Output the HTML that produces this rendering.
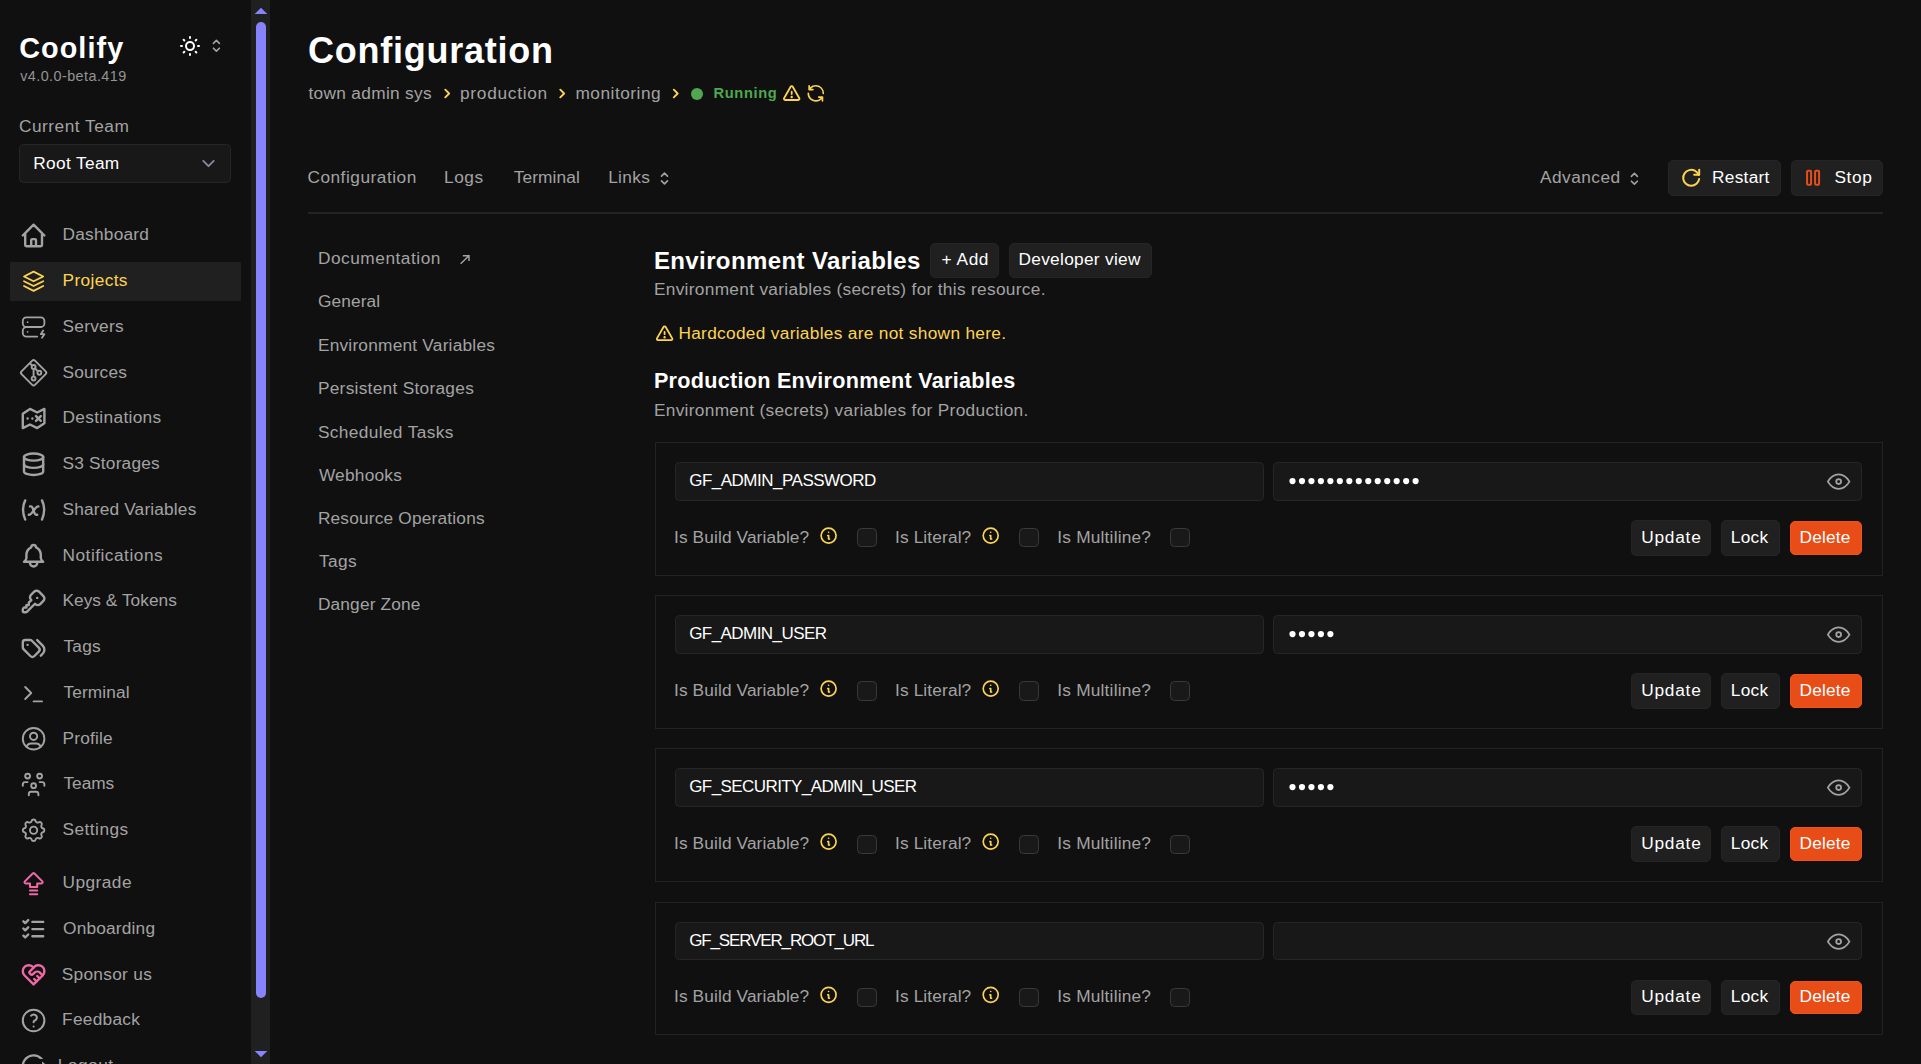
<!DOCTYPE html>
<html lang="en"><head><meta charset="utf-8">
<title>Configuration | Coolify</title>
<style>
html,body{margin:0;padding:0;background:#101010;}
body{width:1921px;height:1064px;overflow:hidden;position:relative;font-family:"Liberation Sans",sans-serif;}
.t{position:absolute;white-space:pre;line-height:1;}
.a{position:absolute;box-sizing:border-box;}
svg{position:absolute;overflow:visible;}
.ic{fill:none;stroke:currentColor;stroke-linecap:round;stroke-linejoin:round;}

.btn{position:absolute;box-sizing:border-box;background:#202020;border:1px solid #252525;border-radius:5px;}
.inp{position:absolute;box-sizing:border-box;background:#181818;border:1px solid #262626;border-radius:4.5px;}
.cb{position:absolute;box-sizing:border-box;background:#191919;border:1px solid #393939;border-radius:4.5px;width:20px;height:19.5px;}
.card{position:absolute;box-sizing:border-box;border:1px solid #222;}

</style></head><body>
<div class="a" style="left:251px;top:0;width:19px;height:1064px;background:#202020"></div>
<div class="a" style="left:256px;top:22px;width:10px;height:976px;background:#8783fd;border-radius:5px"></div>
<svg width="20" height="10" style="left:251px;top:5px"><path d="M3.7 9.1L10 2.8L16.3 9.1z" fill="#8783fd"/></svg>
<svg width="20" height="10" style="left:251px;top:1049px"><path d="M3.7 1.9L10 8.2L16.3 1.9z" fill="#8783fd"/></svg>
<svg class="ic" viewBox="0 0 24 24" width="24" height="24" style="left:178px;top:34px;color:#ffffff;stroke-width:2;"><g transform="translate(0.000 0.100)"><path d="M12 3v1m0 16v1m9-9h-1M4 12H3m15.364 6.364l-.707-.707M6.343 6.343l-.707-.707m12.728 0l-.707.707M6.343 17.657l-.707.707M16 12a4 4 0 11-8 0 4 4 0 018 0z"/></g></svg>
<svg class="ic" viewBox="0 0 24 24" width="19.2" height="19.2" style="left:206px;top:36px;color:#a3a3a3;stroke-width:2;"><g transform="translate(1.000 0.250)"><path d="M8.25 15L12 18.75 15.75 15m-7.500-6L12 5.250 15.750 9"/></g></svg>
<div class="inp" style="left:19.4px;top:144.2px;width:211.7px;height:38.4px;"></div>
<svg class="ic" viewBox="0 0 20 20" width="26" height="26" style="left:195px;top:150px;color:#8189a0;stroke-width:1.5;"><g transform="translate(0.385 0.385)"><path d="M6 8l4 4 4-4"/></g></svg>
<div class="a" style="left:9.6px;top:262.4px;width:231.6px;height:38.4px;background:#202020;border-radius:1px"></div>
<svg class="ic" viewBox="0 0 24 24" width="28.8" height="28.8" style="left:19px;top:221px;color:#a3a3a3;stroke-width:2;"><g transform="translate(0.167 0.083)"><path d="M3 12l2-2m0 0l7-7 7 7M5 10v10a1 1 0 001 1h3m10-11l2 2m-2-2v10a1 1 0 01-1 1h-3m-6 0a1 1 0 001-1v-4a1 1 0 011-1h2a1 1 0 011 1v4a1 1 0 001 1m-6 0h6"/></g></svg>
<svg class="ic" viewBox="0 0 24 24" width="28.8" height="28.8" style="left:19px;top:266px;color:#fcd452;stroke-width:1.5;"><g transform="translate(0.167 0.708)"><path d="M12 4l-8 4l8 4l8 -4l-8 -4"/><path d="M4 12l8 4l8 -4"/><path d="M4 16l8 4l8 -4"/></g></svg>
<svg class="ic" viewBox="0 0 24 24" width="28.8" height="28.8" style="left:19px;top:312px;color:#a3a3a3;stroke-width:1.5;"><g transform="translate(0.167 0.500)"><path d="M3 4m0 3a3 3 0 0 1 3 -3h12a3 3 0 0 1 3 3v2a3 3 0 0 1 -3 3h-12a3 3 0 0 1 -3 -3z"/><path d="M15 20h-9a3 3 0 0 1 -3 -3v-2a3 3 0 0 1 3 -3h12"/><path d="M7 8v.01"/><path d="M7 16v.01"/><path d="M20 15l-2 3h3l-2 3"/></g></svg>
<svg class="ic" viewBox="0 0 24 24" width="28.8" height="28.8" style="left:19px;top:358px;color:#a3a3a3;stroke-width:1;"><g transform="translate(0.167 0.292)"><g transform="scale(1.6)"><rect x="2.55" y="2.55" width="9.9" height="9.9" rx="1" transform="rotate(45 7.5 7.5)"/><circle cx="7.5" cy="4.5" r="1"/><circle cx="10.5" cy="7.5" r="1"/><circle cx="7.5" cy="10.5" r="1"/><path d="M7.5 5.5v4M8.4 5.4l1.4 1.4M5.5 2.5l1.1 1.1" stroke-linecap="butt"/></g></g></svg>
<svg class="ic" viewBox="0 0 24 24" width="28.8" height="28.8" style="left:19px;top:404px;color:#a3a3a3;stroke-width:2;"><g transform="translate(0.167 0.083)"><path d="M9 4L3 8v12l6-3l6 3l6-4V4l-6 3l-6-3zm-2 8v.01M11 12v.01M14 10l4 4m0-4l-4 4"/></g></svg>
<svg class="ic" viewBox="0 0 24 24" width="28.8" height="28.8" style="left:19px;top:449px;color:#a3a3a3;stroke-width:2;"><g transform="translate(0.167 0.708)"><path d="M4 6a8 3 0 1 0 16 0A8 3 0 1 0 4 6"/><path d="M4 6v6a8 3 0 0 0 16 0V6"/><path d="M4 12v6a8 3 0 0 0 16 0v-6"/></g></svg>
<svg class="ic" viewBox="0 0 24 24" width="28.8" height="28.8" style="left:19px;top:495px;color:#a3a3a3;stroke-width:2;"><g transform="translate(0.167 0.500)"><path d="M5 4C2.500 9 2.500 14 5 20M19 4c2.500 5 2.500 10 0 16M9 9h1c1 0 1 1 2.016 3.527C13 15 13 16 14 16h1"/><path d="M8 16c1.500 0 3-2 4-3.500S14.500 9 16 9"/></g></svg>
<svg class="ic" viewBox="0 0 24 24" width="28.8" height="28.8" style="left:19px;top:541px;color:#a3a3a3;stroke-width:2;"><g transform="translate(0.167 0.292)"><path d="M10 5a2 2 0 1 1 4 0a7 7 0 0 1 4 6v3a4 4 0 0 0 2 3H4a4 4 0 0 0 2-3v-3a7 7 0 0 1 4-6M9 17v1a3 3 0 0 0 6 0v-1"/></g></svg>
<svg class="ic" viewBox="0 0 24 24" width="28.8" height="28.8" style="left:19px;top:587px;color:#a3a3a3;stroke-width:2;"><g transform="translate(0.167 0.083)"><path d="m16.555 3.843l3.602 3.602a2.877 2.877 0 0 1 0 4.069l-2.643 2.643a2.877 2.877 0 0 1-4.069 0l-.301-.301l-6.558 6.558a2 2 0 0 1-1.239.578L5.172 21H4a1 1 0 0 1-.993-.883L3 20v-1.172a2 2 0 0 1 .467-1.284l.119-.13L4 17h2v-2h2v-2l2.144-2.144l-.301-.301a2.877 2.877 0 0 1 0-4.069l2.643-2.643a2.877 2.877 0 0 1 4.069 0zM15 9h.01"/></g></svg>
<svg class="ic" viewBox="0 0 24 24" width="28.8" height="28.8" style="left:19px;top:632px;color:#a3a3a3;stroke-width:2;"><g transform="translate(0.167 0.708)"><path d="M3 8v4.172a2 2 0 0 0 .586 1.414l5.710 5.710a2.410 2.410 0 0 0 3.408 0l3.592-3.592a2.410 2.410 0 0 0 0-3.408l-5.710-5.710A2 2 0 0 0 9.172 6H5a2 2 0 0 0-2 2"/><path d="m18 19l1.592-1.592a4.820 4.820 0 0 0 0-6.816L15 6m-8 4h-.01"/></g></svg>
<svg class="ic" viewBox="0 0 24 24" width="28.8" height="28.8" style="left:19px;top:678px;color:#a3a3a3;stroke-width:1.6;"><g transform="translate(0.167 0.500)"><path d="m5 7l5 5l-5 5m7 2h7"/></g></svg>
<svg class="ic" viewBox="0 0 24 24" width="28.8" height="28.8" style="left:19px;top:724px;color:#a3a3a3;stroke-width:1.6;"><g transform="translate(0.167 0.292)"><path d="M3 12a9 9 0 1 0 18 0a9 9 0 1 0-18 0"/><path d="M9 10a3 3 0 1 0 6 0a3 3 0 1 0-6 0m-2.832 8.849A4 4 0 0 1 10 16h4a4 4 0 0 1 3.834 2.855"/></g></svg>
<svg class="ic" viewBox="0 0 24 24" width="28.8" height="28.8" style="left:19px;top:770px;color:#a3a3a3;stroke-width:1.6;"><g transform="translate(0.167 0.083)"><path d="M10 13a2 2 0 1 0 4 0a2 2 0 0 0-4 0m-2 8v-1a2 2 0 0 1 2-2h4a2 2 0 0 1 2 2v1M15 5a2 2 0 1 0 4 0a2 2 0 0 0-4 0m2 5h2a2 2 0 0 1 2 2v1M5 5a2 2 0 1 0 4 0a2 2 0 0 0-4 0m-2 8v-1a2 2 0 0 1 2-2h2"/></g></svg>
<svg class="ic" viewBox="0 0 24 24" width="28.8" height="28.8" style="left:19px;top:815px;color:#a3a3a3;stroke-width:1.6;"><g transform="translate(0.167 0.708)"><path d="M10.325 4.317c.426-1.756 2.924-1.756 3.350 0a1.724 1.724 0 0 0 2.573 1.066c1.543-.940 3.310.826 2.370 2.370a1.724 1.724 0 0 0 1.065 2.572c1.756.426 1.756 2.924 0 3.350a1.724 1.724 0 0 0-1.066 2.573c.940 1.543-.826 3.310-2.370 2.370a1.724 1.724 0 0 0-2.572 1.065c-.426 1.756-2.924 1.756-3.350 0a1.724 1.724 0 0 0-2.573-1.066c-1.543.940-3.310-.826-2.370-2.370a1.724 1.724 0 0 0-1.065-2.572c-1.756-.426-1.756-2.924 0-3.350a1.724 1.724 0 0 0 1.066-2.573c-.940-1.543.826-3.310 2.370-2.370c1 .608 2.296.070 2.572-1.065"/><path d="M9 12a3 3 0 1 0 6 0a3 3 0 0 0-6 0"/></g></svg>
<svg class="ic" viewBox="0 0 24 24" width="28.8" height="28.8" style="left:19px;top:869px;color:#ee69a5;stroke-width:1.7;"><g transform="translate(0.167 0.000)"><path d="M9 12H5.414a1 1 0 0 1-.707-1.707l6.586-6.586a1 1 0 0 1 1.414 0l6.586 6.586A1 1 0 0 1 18.586 12H15v3H9zm0 9h6m-6-3h6"/></g></svg>
<svg class="ic" viewBox="0 0 24 24" width="28.8" height="28.8" style="left:19px;top:914px;color:#a3a3a3;stroke-width:2;"><g transform="translate(0.167 0.583)"><path d="m3.500 5.500l1.500 1.500l2.500-2.500m-4 7l1.500 1.500l2.500-2.500m-4 7l1.500 1.500l2.500-2.500M11 6h9m-9 6h9m-9 6h9"/></g></svg>
<svg class="ic" viewBox="0 0 24 24" width="28.8" height="28.8" style="left:19px;top:960px;color:#ee69a5;stroke-width:2;"><g transform="translate(0.167 0.333)"><path d="M19.500 12.572L12 20l-7.500-7.428A5 5 0 1 1 12 6.006a5 5 0 1 1 7.500 6.572"/><path d="M12 6L8.707 9.293a1 1 0 0 0 0 1.414l.543.543c.690.690 1.810.690 2.500 0l1-1a3.182 3.182 0 0 1 4.500 0l2.250 2.250m-7 3l2 2M15 13l2 2"/></g></svg>
<svg class="ic" viewBox="0 0 24 24" width="28.8" height="28.8" style="left:19px;top:1006px;color:#a3a3a3;stroke-width:1.7;"><g transform="translate(0.167 0.083)"><path d="M3 12a9 9 0 1 0 18 0a9 9 0 0 0-18 0m9 5v.01"/><path d="M12 13.500a1.500 1.500 0 0 1 1-1.500a2.600 2.600 0 1 0-3-4"/></g></svg>
<svg class="ic" viewBox="0 0 24 24" width="28.8" height="28.8" style="left:19px;top:1051px;color:#a3a3a3;"><g transform="translate(0.167 0.667)"><path fill="currentColor" stroke="none" d="M12 22C6.477 22 2 17.523 2 12S6.477 2 12 2a9.985 9.985 0 0 1 8 4h-2.710a8 8 0 1 0 .001 12h2.710A9.985 9.985 0 0 1 12 22m7-6v-3h-8v-2h8V8l5 4z"/></g></svg>
<svg class="ic" viewBox="0 0 20 20" width="19.2" height="19.2" style="left:437px;top:83px;color:#fcd452;"><g transform="translate(0.625 0.938)"><path fill="currentColor" stroke="none" fill-rule="evenodd" d="M7.293 14.707a1 1 0 010-1.414L10.586 10 7.293 6.707a1 1 0 011.414-1.414l4 4a1 1 0 010 1.414l-4 4a1 1 0 01-1.414 0z" clip-rule="evenodd"/></g></svg>
<svg class="ic" viewBox="0 0 20 20" width="19.2" height="19.2" style="left:552px;top:83px;color:#fcd452;"><g transform="translate(0.625 0.938)"><path fill="currentColor" stroke="none" fill-rule="evenodd" d="M7.293 14.707a1 1 0 010-1.414L10.586 10 7.293 6.707a1 1 0 011.414-1.414l4 4a1 1 0 010 1.414l-4 4a1 1 0 01-1.414 0z" clip-rule="evenodd"/></g></svg>
<svg class="ic" viewBox="0 0 20 20" width="19.2" height="19.2" style="left:666px;top:83px;color:#fcd452;"><g transform="translate(0.156 0.938)"><path fill="currentColor" stroke="none" fill-rule="evenodd" d="M7.293 14.707a1 1 0 010-1.414L10.586 10 7.293 6.707a1 1 0 011.414-1.414l4 4a1 1 0 010 1.414l-4 4a1 1 0 01-1.414 0z" clip-rule="evenodd"/></g></svg>
<div class="a" style="left:690.8px;top:87.7px;width:12.4px;height:12.4px;border-radius:50%;background:#4fa84f"></div>
<svg class="ic" viewBox="0 0 256 256" width="19.2" height="19.2" style="left:782px;top:83px;color:#fcd452;"><g transform="translate(1.333 10.667)"><path fill="currentColor" stroke="none" d="M240.260 186.100L152.810 34.230a28.740 28.740 0 0 0-49.620 0L15.740 186.100a27.450 27.450 0 0 0 0 27.710A28.310 28.310 0 0 0 40.550 228h174.900a28.310 28.310 0 0 0 24.790-14.190a27.450 27.450 0 0 0 .020-27.710m-20.800 15.700a4.460 4.460 0 0 1-4 2.200H40.550a4.460 4.460 0 0 1-4-2.200a3.560 3.560 0 0 1 0-3.730L124 46.200a4.770 4.770 0 0 1 8 0l87.440 151.870a3.560 3.560 0 0 1 .020 3.730M116 136v-32a12 12 0 0 1 24 0v32a12 12 0 0 1-24 0m28 40a16 16 0 1 1-16-16a16 16 0 0 1 16 16"/></g></svg>
<svg class="ic" viewBox="0 0 24 24" width="20" height="20" style="left:805px;top:83px;color:#fcd452;"><g transform="translate(0.960 0.360)"><path fill="currentColor" stroke="none" d="M12 2a10.016 10.016 0 0 0-7 2.877V3a1 1 0 1 0-2 0v4.500a1 1 0 0 0 1 1h4.500a1 1 0 0 0 0-2H6.218A7.980 7.980 0 0 1 20 12a1 1 0 0 0 2 0A10.012 10.012 0 0 0 12 2zm7.989 13.500h-4.500a1 1 0 0 0 0 2h2.293A7.980 7.980 0 0 1 4 12a1 1 0 0 0-2 0a9.986 9.986 0 0 0 16.989 7.133V21a1 1 0 0 0 2 0v-4.500a1 1 0 0 0-1-1z"/></g></svg>
<svg class="ic" viewBox="0 0 24 24" width="19.2" height="19.2" style="left:654px;top:168px;color:#a3a3a3;stroke-width:2;"><g transform="translate(1.125 1.125)"><path d="M8.25 15L12 18.75 15.75 15m-7.500-6L12 5.250 15.750 9"/></g></svg>
<svg class="ic" viewBox="0 0 24 24" width="19.2" height="19.2" style="left:1624px;top:169px;color:#a3a3a3;stroke-width:2;"><g transform="translate(1.000 0.250)"><path d="M8.25 15L12 18.75 15.75 15m-7.500-6L12 5.250 15.750 9"/></g></svg>
<div class="a" style="left:308px;top:211.6px;width:1575px;height:2.4px;background:#242424"></div>
<div class="btn" style="left:1668.2px;top:160.2px;width:112.8px;height:35.4px"></div>
<div class="btn" style="left:1791px;top:160.2px;width:92px;height:35.4px"></div>
<svg class="ic" viewBox="0 0 24 24" width="24" height="24" style="left:1679px;top:165px;color:#fcd452;stroke-width:2;"><g transform="translate(0.200 0.850)"><path d="M19.933 13.041a8 8 0 1 1-9.925-8.788c3.899-1 7.935 1.007 9.425 4.747"/><path d="M20 4v5h-5"/></g></svg>
<svg class="ic" viewBox="0 0 24 24" width="24" height="24" style="left:1801px;top:165px;color:#e84e1b;stroke-width:2;"><g transform="translate(0.100 0.650)"><path d="M6 5m0 1a1 1 0 0 1 1 -1h2a1 1 0 0 1 1 1v12a1 1 0 0 1 -1 1h-2a1 1 0 0 1 -1 -1z"/><path d="M14 5m0 1a1 1 0 0 1 1 -1h2a1 1 0 0 1 1 1v12a1 1 0 0 1 -1 1h-2a1 1 0 0 1 -1 -1z"/></g></svg>
<svg width="20" height="20" style="left:455px;top:250px" fill="none" stroke="#a3a3a3" stroke-width="1.45" stroke-linecap="square" stroke-linejoin="miter"><path d="M6.2 13.2L13.9 5.8M8.6 5.7H14V10.3"/></svg>
<div class="btn" style="left:930.1px;top:242.9px;width:68.9px;height:34.9px"></div>
<div class="btn" style="left:1009.1px;top:242.9px;width:142.9px;height:34.9px"></div>
<svg class="ic" viewBox="0 0 256 256" width="19.2" height="19.2" style="left:655px;top:324px;color:#fcd452;"><g transform="translate(0.000 0.000)"><path fill="currentColor" stroke="none" d="M240.260 186.100L152.810 34.230a28.740 28.740 0 0 0-49.620 0L15.740 186.100a27.450 27.450 0 0 0 0 27.710A28.310 28.310 0 0 0 40.550 228h174.900a28.310 28.310 0 0 0 24.790-14.190a27.450 27.450 0 0 0 .020-27.710m-20.800 15.700a4.460 4.460 0 0 1-4 2.200H40.550a4.460 4.460 0 0 1-4-2.200a3.560 3.560 0 0 1 0-3.730L124 46.200a4.770 4.770 0 0 1 8 0l87.440 151.870a3.560 3.560 0 0 1 .020 3.730M116 136v-32a12 12 0 0 1 24 0v32a12 12 0 0 1-24 0m28 40a16 16 0 1 1-16-16a16 16 0 0 1 16 16"/></g></svg>
<div class="card" style="left:655px;top:442px;width:1228px;height:134px"></div>
<div class="inp" style="left:675px;top:462px;width:589px;height:39px"></div>
<div class="inp" style="left:1273px;top:462px;width:589px;height:39px"></div>
<svg width="140" height="10" style="left:1289px;top:476px;fill:#fff"><circle cx="3.50" cy="5.1" r="3.1"/><circle cx="12.97" cy="5.1" r="3.1"/><circle cx="22.44" cy="5.1" r="3.1"/><circle cx="31.91" cy="5.1" r="3.1"/><circle cx="41.38" cy="5.1" r="3.1"/><circle cx="50.85" cy="5.1" r="3.1"/><circle cx="60.32" cy="5.1" r="3.1"/><circle cx="69.79" cy="5.1" r="3.1"/><circle cx="79.26" cy="5.1" r="3.1"/><circle cx="88.73" cy="5.1" r="3.1"/><circle cx="98.20" cy="5.1" r="3.1"/><circle cx="107.67" cy="5.1" r="3.1"/><circle cx="117.14" cy="5.1" r="3.1"/><circle cx="126.61" cy="5.1" r="3.1"/></svg>
<svg class="ic" viewBox="0 0 24 24" width="28.8" height="28.8" style="left:1824px;top:467px;color:#a3a3a3;stroke-width:1.5;"><g transform="translate(0.208 0.167)"><path d="M10 12a2 2 0 1 0 4 0a2 2 0 0 0 -4 0"/><path d="M21 12c-2.400 4 -5.400 6 -9 6c-3.600 0 -6.600 -2 -9 -6c2.400 -4 5.400 -6 9 -6c3.600 0 6.600 2 9 6"/></g></svg>
<svg class="ic" viewBox="0 0 24 24" width="20" height="20" style="left:818px;top:525px;color:#fcd452;stroke-width:2;"><g transform="translate(0.720 0.720)"><path d="M13 16h-1v-4h-1m1-4h.01M21 12a9 9 0 11-18 0 9 9 0 0118 0z"/></g></svg>
<svg class="ic" viewBox="0 0 24 24" width="20" height="20" style="left:980px;top:525px;color:#fcd452;stroke-width:2;"><g transform="translate(0.840 0.720)"><path d="M13 16h-1v-4h-1m1-4h.01M21 12a9 9 0 11-18 0 9 9 0 0118 0z"/></g></svg>
<div class="cb" style="left:857px;top:527.70px;height:19.5px"></div>
<div class="cb" style="left:1019.4px;top:527.70px;height:19.5px"></div>
<div class="cb" style="left:1170.2px;top:527.70px;height:19.5px"></div>
<div class="btn" style="left:1631px;top:520px;width:80px;height:36px"></div>
<div class="btn" style="left:1721px;top:520px;width:59px;height:36px"></div>
<div class="btn" style="left:1790px;top:521px;width:71.5px;height:34px;background:#e84d18;border:1px solid #f4521b"></div>
<div class="card" style="left:655px;top:595px;width:1228px;height:134px"></div>
<div class="inp" style="left:675px;top:615px;width:589px;height:39px"></div>
<div class="inp" style="left:1273px;top:615px;width:589px;height:39px"></div>
<svg width="140" height="10" style="left:1289px;top:629px;fill:#fff"><circle cx="3.50" cy="5.1" r="3.1"/><circle cx="12.97" cy="5.1" r="3.1"/><circle cx="22.44" cy="5.1" r="3.1"/><circle cx="31.91" cy="5.1" r="3.1"/><circle cx="41.38" cy="5.1" r="3.1"/></svg>
<svg class="ic" viewBox="0 0 24 24" width="28.8" height="28.8" style="left:1824px;top:620px;color:#a3a3a3;stroke-width:1.5;"><g transform="translate(0.208 0.167)"><path d="M10 12a2 2 0 1 0 4 0a2 2 0 0 0 -4 0"/><path d="M21 12c-2.400 4 -5.400 6 -9 6c-3.600 0 -6.600 -2 -9 -6c2.400 -4 5.400 -6 9 -6c3.600 0 6.600 2 9 6"/></g></svg>
<svg class="ic" viewBox="0 0 24 24" width="20" height="20" style="left:818px;top:678px;color:#fcd452;stroke-width:2;"><g transform="translate(0.720 0.720)"><path d="M13 16h-1v-4h-1m1-4h.01M21 12a9 9 0 11-18 0 9 9 0 0118 0z"/></g></svg>
<svg class="ic" viewBox="0 0 24 24" width="20" height="20" style="left:980px;top:678px;color:#fcd452;stroke-width:2;"><g transform="translate(0.840 0.720)"><path d="M13 16h-1v-4h-1m1-4h.01M21 12a9 9 0 11-18 0 9 9 0 0118 0z"/></g></svg>
<div class="cb" style="left:857px;top:680.90px;height:20px"></div>
<div class="cb" style="left:1019.4px;top:680.90px;height:20px"></div>
<div class="cb" style="left:1170.2px;top:680.90px;height:20px"></div>
<div class="btn" style="left:1631px;top:673px;width:80px;height:36px"></div>
<div class="btn" style="left:1721px;top:673px;width:59px;height:36px"></div>
<div class="btn" style="left:1790px;top:674px;width:71.5px;height:34px;background:#e84d18;border:1px solid #f4521b"></div>
<div class="card" style="left:655px;top:748px;width:1228px;height:134px"></div>
<div class="inp" style="left:675px;top:768px;width:589px;height:39px"></div>
<div class="inp" style="left:1273px;top:768px;width:589px;height:39px"></div>
<svg width="140" height="10" style="left:1289px;top:782px;fill:#fff"><circle cx="3.50" cy="5.1" r="3.1"/><circle cx="12.97" cy="5.1" r="3.1"/><circle cx="22.44" cy="5.1" r="3.1"/><circle cx="31.91" cy="5.1" r="3.1"/><circle cx="41.38" cy="5.1" r="3.1"/></svg>
<svg class="ic" viewBox="0 0 24 24" width="28.8" height="28.8" style="left:1824px;top:773px;color:#a3a3a3;stroke-width:1.5;"><g transform="translate(0.208 0.167)"><path d="M10 12a2 2 0 1 0 4 0a2 2 0 0 0 -4 0"/><path d="M21 12c-2.400 4 -5.400 6 -9 6c-3.600 0 -6.600 -2 -9 -6c2.400 -4 5.400 -6 9 -6c3.600 0 6.600 2 9 6"/></g></svg>
<svg class="ic" viewBox="0 0 24 24" width="20" height="20" style="left:818px;top:831px;color:#fcd452;stroke-width:2;"><g transform="translate(0.720 0.720)"><path d="M13 16h-1v-4h-1m1-4h.01M21 12a9 9 0 11-18 0 9 9 0 0118 0z"/></g></svg>
<svg class="ic" viewBox="0 0 24 24" width="20" height="20" style="left:980px;top:831px;color:#fcd452;stroke-width:2;"><g transform="translate(0.840 0.720)"><path d="M13 16h-1v-4h-1m1-4h.01M21 12a9 9 0 11-18 0 9 9 0 0118 0z"/></g></svg>
<div class="cb" style="left:857px;top:835.00px;height:19px"></div>
<div class="cb" style="left:1019.4px;top:835.00px;height:19px"></div>
<div class="cb" style="left:1170.2px;top:835.00px;height:19px"></div>
<div class="btn" style="left:1631px;top:826px;width:80px;height:36px"></div>
<div class="btn" style="left:1721px;top:826px;width:59px;height:36px"></div>
<div class="btn" style="left:1790px;top:827px;width:71.5px;height:34px;background:#e84d18;border:1px solid #f4521b"></div>
<div class="card" style="left:655px;top:902px;width:1228px;height:133px"></div>
<div class="inp" style="left:675px;top:922px;width:589px;height:38px"></div>
<div class="inp" style="left:1273px;top:922px;width:589px;height:38px"></div>
<svg class="ic" viewBox="0 0 24 24" width="28.8" height="28.8" style="left:1824px;top:927px;color:#a3a3a3;stroke-width:1.5;"><g transform="translate(0.208 0.167)"><path d="M10 12a2 2 0 1 0 4 0a2 2 0 0 0 -4 0"/><path d="M21 12c-2.400 4 -5.400 6 -9 6c-3.600 0 -6.600 -2 -9 -6c2.400 -4 5.400 -6 9 -6c3.600 0 6.600 2 9 6"/></g></svg>
<svg class="ic" viewBox="0 0 24 24" width="20" height="20" style="left:818px;top:984px;color:#fcd452;stroke-width:2;"><g transform="translate(0.720 0.960)"><path d="M13 16h-1v-4h-1m1-4h.01M21 12a9 9 0 11-18 0 9 9 0 0118 0z"/></g></svg>
<svg class="ic" viewBox="0 0 24 24" width="20" height="20" style="left:980px;top:984px;color:#fcd452;stroke-width:2;"><g transform="translate(0.840 0.960)"><path d="M13 16h-1v-4h-1m1-4h.01M21 12a9 9 0 11-18 0 9 9 0 0118 0z"/></g></svg>
<div class="cb" style="left:857px;top:987.90px;height:19.2px"></div>
<div class="cb" style="left:1019.4px;top:987.90px;height:19.2px"></div>
<div class="cb" style="left:1170.2px;top:987.90px;height:19.2px"></div>
<div class="btn" style="left:1631px;top:980px;width:80px;height:35px"></div>
<div class="btn" style="left:1721px;top:980px;width:59px;height:35px"></div>
<div class="btn" style="left:1790px;top:981px;width:71.5px;height:33px;background:#e84d18;border:1px solid #f4521b"></div>
<div class="t" style="left:19.20px;top:34.32px;font-size:28.8px;letter-spacing:1.067px;color:#ffffff;font-weight:700;">Coolify</div>
<div class="t" style="left:20.20px;top:69.01px;font-size:14.4px;letter-spacing:0.429px;color:#949494;">v4.0.0-beta.419</div>
<div class="t" style="left:19.00px;top:118.46px;font-size:17.3px;letter-spacing:0.500px;color:#a3a3a3;">Current Team</div>
<div class="t" style="left:33.30px;top:155.46px;font-size:17.3px;letter-spacing:0.338px;color:#ffffff;">Root Team</div>
<div class="t" style="left:62.50px;top:226.46px;font-size:17.3px;letter-spacing:0.238px;color:#a3a3a3;">Dashboard</div>
<div class="t" style="left:62.50px;top:272.21px;font-size:17.3px;letter-spacing:0.357px;color:#fcd452;">Projects</div>
<div class="t" style="left:62.50px;top:317.96px;font-size:17.3px;letter-spacing:0.267px;color:#a3a3a3;">Servers</div>
<div class="t" style="left:62.50px;top:363.71px;font-size:17.3px;letter-spacing:0.150px;color:#a3a3a3;">Sources</div>
<div class="t" style="left:62.50px;top:409.46px;font-size:17.3px;letter-spacing:0.327px;color:#a3a3a3;">Destinations</div>
<div class="t" style="left:62.50px;top:455.21px;font-size:17.3px;letter-spacing:0.210px;color:#a3a3a3;">S3 Storages</div>
<div class="t" style="left:62.50px;top:500.96px;font-size:17.3px;letter-spacing:0.167px;color:#a3a3a3;">Shared Variables</div>
<div class="t" style="left:62.50px;top:546.71px;font-size:17.3px;letter-spacing:0.500px;color:#a3a3a3;">Notifications</div>
<div class="t" style="left:62.50px;top:592.46px;font-size:17.3px;letter-spacing:0.025px;color:#a3a3a3;">Keys &amp; Tokens</div>
<div class="t" style="left:63.50px;top:638.21px;font-size:17.3px;letter-spacing:0.233px;color:#a3a3a3;">Tags</div>
<div class="t" style="left:63.50px;top:683.96px;font-size:17.3px;letter-spacing:0.100px;color:#a3a3a3;">Terminal</div>
<div class="t" style="left:62.50px;top:729.71px;font-size:17.3px;letter-spacing:0.183px;color:#a3a3a3;">Profile</div>
<div class="t" style="left:63.50px;top:775.46px;font-size:17.3px;letter-spacing:-0.050px;color:#a3a3a3;">Teams</div>
<div class="t" style="left:62.50px;top:821.21px;font-size:17.3px;letter-spacing:0.471px;color:#a3a3a3;">Settings</div>
<div class="t" style="left:62.50px;top:874.36px;font-size:17.3px;letter-spacing:0.450px;color:#a3a3a3;">Upgrade</div>
<div class="t" style="left:63.00px;top:920.06px;font-size:17.3px;letter-spacing:0.189px;color:#a3a3a3;">Onboarding</div>
<div class="t" style="left:61.70px;top:965.76px;font-size:17.3px;letter-spacing:0.300px;color:#a3a3a3;">Sponsor us</div>
<div class="t" style="left:62.10px;top:1011.46px;font-size:17.3px;letter-spacing:0.257px;color:#a3a3a3;">Feedback</div>
<div class="t" style="left:57.70px;top:1057.16px;font-size:17.3px;letter-spacing:0.500px;color:#a3a3a3;">Logout</div>
<div class="t" style="left:308.00px;top:33.03px;font-size:36px;letter-spacing:0.750px;color:#ffffff;font-weight:700;">Configuration</div>
<div class="t" style="left:308.40px;top:85.21px;font-size:17.3px;letter-spacing:0.323px;color:#a3a3a3;">town admin sys</div>
<div class="t" style="left:460.00px;top:85.21px;font-size:17.3px;letter-spacing:0.722px;color:#a3a3a3;">production</div>
<div class="t" style="left:575.40px;top:85.21px;font-size:17.3px;letter-spacing:0.511px;color:#a3a3a3;">monitoring</div>
<div class="t" style="left:713.60px;top:85.66px;font-size:14.7px;letter-spacing:0.600px;color:#4fa84f;font-weight:700;">Running</div>
<div class="t" style="left:307.40px;top:168.76px;font-size:17.3px;letter-spacing:0.508px;color:#a3a3a3;">Configuration</div>
<div class="t" style="left:444.00px;top:168.76px;font-size:17.3px;letter-spacing:0.567px;color:#a3a3a3;">Logs</div>
<div class="t" style="left:513.70px;top:168.76px;font-size:17.3px;letter-spacing:0.114px;color:#a3a3a3;">Terminal</div>
<div class="t" style="left:608.20px;top:168.76px;font-size:17.3px;letter-spacing:0.325px;color:#a3a3a3;">Links</div>
<div class="t" style="left:1540.00px;top:168.91px;font-size:17.3px;letter-spacing:0.471px;color:#a3a3a3;">Advanced</div>
<div class="t" style="left:1712.00px;top:168.91px;font-size:17.3px;letter-spacing:0.283px;color:#ffffff;">Restart</div>
<div class="t" style="left:1834.40px;top:168.91px;font-size:17.3px;letter-spacing:0.667px;color:#ffffff;">Stop</div>
<div class="t" style="left:317.90px;top:249.81px;font-size:17.3px;letter-spacing:0.525px;color:#a3a3a3;">Documentation</div>
<div class="t" style="left:317.90px;top:293.41px;font-size:17.3px;letter-spacing:0.133px;color:#a3a3a3;">General</div>
<div class="t" style="left:317.90px;top:336.71px;font-size:17.3px;letter-spacing:0.220px;color:#a3a3a3;">Environment Variables</div>
<div class="t" style="left:317.90px;top:380.01px;font-size:17.3px;letter-spacing:0.283px;color:#a3a3a3;">Persistent Storages</div>
<div class="t" style="left:317.90px;top:423.51px;font-size:17.3px;letter-spacing:0.364px;color:#a3a3a3;">Scheduled Tasks</div>
<div class="t" style="left:318.90px;top:466.81px;font-size:17.3px;letter-spacing:0.229px;color:#a3a3a3;">Webhooks</div>
<div class="t" style="left:317.90px;top:509.91px;font-size:17.3px;letter-spacing:0.189px;color:#a3a3a3;">Resource Operations</div>
<div class="t" style="left:318.90px;top:553.31px;font-size:17.3px;letter-spacing:0.433px;color:#a3a3a3;">Tags</div>
<div class="t" style="left:317.90px;top:596.31px;font-size:17.3px;letter-spacing:0.170px;color:#a3a3a3;">Danger Zone</div>
<div class="t" style="left:653.90px;top:248.68px;font-size:24px;letter-spacing:0.390px;color:#ffffff;font-weight:700;">Environment Variables</div>
<div class="t" style="left:941.40px;top:250.61px;font-size:17.3px;letter-spacing:0.600px;color:#ffffff;">+ Add</div>
<div class="t" style="left:1018.50px;top:250.61px;font-size:17.3px;letter-spacing:0.292px;color:#ffffff;">Developer view</div>
<div class="t" style="left:653.90px;top:280.81px;font-size:17.3px;letter-spacing:0.308px;color:#a3a3a3;">Environment variables (secrets) for this resource.</div>
<div class="t" style="left:678.40px;top:324.76px;font-size:17.3px;letter-spacing:0.305px;color:#fcd452;">Hardcoded variables are not shown here.</div>
<div class="t" style="left:653.90px;top:370.22px;font-size:21.6px;letter-spacing:0.277px;color:#ffffff;font-weight:700;">Production Environment Variables</div>
<div class="t" style="left:653.90px;top:402.36px;font-size:17.3px;letter-spacing:0.309px;color:#a3a3a3;">Environment (secrets) variables for Production.</div>
<div class="t" style="left:689.20px;top:472.31px;font-size:17.0px;letter-spacing:-0.500px;color:#ffffff;">GF_ADMIN_PASSWORD</div>
<div class="t" style="left:674.00px;top:529.06px;font-size:17.3px;letter-spacing:0.118px;color:#a3a3a3;">Is Build Variable?</div>
<div class="t" style="left:895.00px;top:529.06px;font-size:17.3px;letter-spacing:0.130px;color:#a3a3a3;">Is Literal?</div>
<div class="t" style="left:1057.30px;top:529.06px;font-size:17.3px;letter-spacing:0.200px;color:#a3a3a3;">Is Multiline?</div>
<div class="t" style="left:1641.20px;top:529.26px;font-size:17.3px;letter-spacing:0.780px;color:#ffffff;">Update</div>
<div class="t" style="left:1730.70px;top:529.26px;font-size:17.3px;letter-spacing:0.333px;color:#ffffff;">Lock</div>
<div class="t" style="left:1799.60px;top:529.26px;font-size:17.3px;letter-spacing:0.180px;color:#ffffff;">Delete</div>
<div class="t" style="left:689.20px;top:625.31px;font-size:17.0px;letter-spacing:-0.558px;color:#ffffff;">GF_ADMIN_USER</div>
<div class="t" style="left:674.00px;top:682.06px;font-size:17.3px;letter-spacing:0.118px;color:#a3a3a3;">Is Build Variable?</div>
<div class="t" style="left:895.00px;top:682.06px;font-size:17.3px;letter-spacing:0.130px;color:#a3a3a3;">Is Literal?</div>
<div class="t" style="left:1057.30px;top:682.06px;font-size:17.3px;letter-spacing:0.200px;color:#a3a3a3;">Is Multiline?</div>
<div class="t" style="left:1641.20px;top:682.26px;font-size:17.3px;letter-spacing:0.780px;color:#ffffff;">Update</div>
<div class="t" style="left:1730.70px;top:682.26px;font-size:17.3px;letter-spacing:0.333px;color:#ffffff;">Lock</div>
<div class="t" style="left:1799.60px;top:682.26px;font-size:17.3px;letter-spacing:0.180px;color:#ffffff;">Delete</div>
<div class="t" style="left:689.20px;top:778.31px;font-size:17.0px;letter-spacing:-0.576px;color:#ffffff;">GF_SECURITY_ADMIN_USER</div>
<div class="t" style="left:674.00px;top:835.06px;font-size:17.3px;letter-spacing:0.118px;color:#a3a3a3;">Is Build Variable?</div>
<div class="t" style="left:895.00px;top:835.06px;font-size:17.3px;letter-spacing:0.130px;color:#a3a3a3;">Is Literal?</div>
<div class="t" style="left:1057.30px;top:835.06px;font-size:17.3px;letter-spacing:0.200px;color:#a3a3a3;">Is Multiline?</div>
<div class="t" style="left:1641.20px;top:835.26px;font-size:17.3px;letter-spacing:0.780px;color:#ffffff;">Update</div>
<div class="t" style="left:1730.70px;top:835.26px;font-size:17.3px;letter-spacing:0.333px;color:#ffffff;">Lock</div>
<div class="t" style="left:1799.60px;top:835.26px;font-size:17.3px;letter-spacing:0.180px;color:#ffffff;">Delete</div>
<div class="t" style="left:689.20px;top:932.31px;font-size:17.0px;letter-spacing:-1.141px;color:#ffffff;">GF_SERVER_ROOT_URL</div>
<div class="t" style="left:674.00px;top:988.26px;font-size:17.3px;letter-spacing:0.118px;color:#a3a3a3;">Is Build Variable?</div>
<div class="t" style="left:895.00px;top:988.26px;font-size:17.3px;letter-spacing:0.130px;color:#a3a3a3;">Is Literal?</div>
<div class="t" style="left:1057.30px;top:988.26px;font-size:17.3px;letter-spacing:0.200px;color:#a3a3a3;">Is Multiline?</div>
<div class="t" style="left:1641.20px;top:988.46px;font-size:17.3px;letter-spacing:0.780px;color:#ffffff;">Update</div>
<div class="t" style="left:1730.70px;top:988.46px;font-size:17.3px;letter-spacing:0.333px;color:#ffffff;">Lock</div>
<div class="t" style="left:1799.60px;top:988.46px;font-size:17.3px;letter-spacing:0.180px;color:#ffffff;">Delete</div>
</body></html>
